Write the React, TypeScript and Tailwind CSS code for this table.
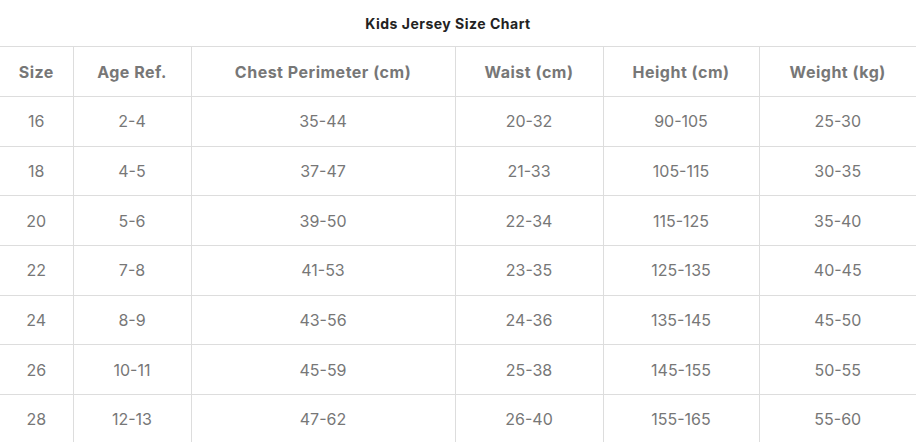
const headers = ["Size", "Age Ref.", "Chest Perimeter (cm)", "Waist (cm)", "Height (cm)", "Weight (kg)"];

const rows = [
  ["16", "2-4", "35-44", "20-32", "90-105", "25-30"],
  ["18", "4-5", "37-47", "21-33", "105-115", "30-35"],
  ["20", "5-6", "39-50", "22-34", "115-125", "35-40"],
  ["22", "7-8", "41-53", "23-35", "125-135", "40-45"],
  ["24", "8-9", "43-56", "24-36", "135-145", "45-50"],
  ["26", "10-11", "45-59", "25-38", "145-155", "50-55"],
  ["28", "12-13", "47-62", "26-40", "155-165", "55-60"],
];

const widths = ["w-[73px]", "w-[118px]", "w-[264px]", "w-[148px]", "w-[156px]", "w-[157px]"];

export default function App() {
  return (
    <div className="w-[916px] h-[442px] overflow-hidden bg-white font-['Inter',sans-serif]">
      <h2 className="h-[46px] flex items-center justify-center pr-[20px] text-[14px] font-bold tracking-[0.5px] text-[#222] pt-[1px]">
        Kids Jersey Size Chart
      </h2>
      <table className="w-[916px] table-fixed border-collapse text-center">
        <colgroup>
          {widths.map((w, i) => (
            <col key={i} className={w} />
          ))}
        </colgroup>
        <thead>
          <tr className="h-[50px] border-y border-[#ddd]">
            {headers.map((h, i) => (
              <th
                key={h}
                className={`font-bold text-[16px] tracking-[0.5px] text-[#777] ${i > 0 ? "border-l border-[#ddd]" : ""}`}
              >
                {h}
              </th>
            ))}
          </tr>
        </thead>
        <tbody>
          {rows.map((r) => (
            <tr key={r[0]} className="h-[49.7px] border-b border-[#ddd]">
              {r.map((c, i) => (
                <td
                  key={i}
                  className={`text-[16px] text-[#777] ${i > 0 ? "border-l border-[#ddd]" : ""}`}
                >
                  {c}
                </td>
              ))}
            </tr>
          ))}
        </tbody>
      </table>
    </div>
  );
}
